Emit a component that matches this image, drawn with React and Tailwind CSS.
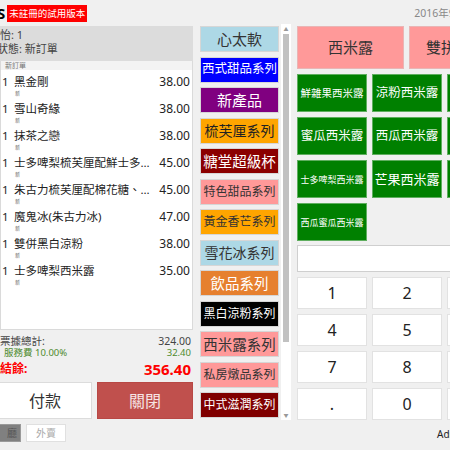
const ITEMS = [
  { q: 1, name: '黑金剛', price: '38.00' },
  { q: 1, name: '雪山奇緣', price: '38.00' },
  { q: 1, name: '抹茶之戀', price: '38.00' },
  { q: 1, name: '士多啤梨梳芙厘配鮮士多啤梨', price: '45.00' },
  { q: 1, name: '朱古力梳芙厘配棉花糖、朱古力', price: '45.00' },
  { q: 1, name: '魔鬼冰(朱古力冰)', price: '47.00' },
  { q: 1, name: '雙併黑白涼粉', price: '38.00' },
  { q: 1, name: '士多啤梨西米露', price: '35.00' },
];

const CATS = [
  { label: '心太軟', cls: 'bg-[#add8e6] text-[#333] text-[15px]' },
  { label: '西式甜品系列', cls: 'bg-[#0000ff] text-white text-[12.5px]' },
  { label: '新產品', cls: 'bg-[#800080] text-white text-[15px]' },
  { label: '梳芙厘系列', cls: 'bg-[#ffa500] text-[#222] text-[14px]' },
  { label: '糖堂超級杯', cls: 'bg-[#8b0000] text-white text-[14.5px]' },
  { label: '特色甜品系列', cls: 'bg-[#ff9999] text-[#333] text-[12px]' },
  { label: '黃金香芒系列', cls: 'bg-[#ffa500] text-[#333] text-[12px]' },
  { label: '雪花冰系列', cls: 'bg-[#add8e6] text-[#333] text-[14px]' },
  { label: '飲品系列', cls: 'bg-[#e6802f] text-white text-[14.5px]' },
  { label: '黑白涼粉系列', cls: 'bg-black text-white text-[12px]' },
  { label: '西米露系列', cls: 'bg-[#ff9999] text-[#333] text-[14.5px]' },
  { label: '私房燉品系列', cls: 'bg-[#ff9999] text-[#333] text-[12px]' },
  { label: '中式滋潤系列', cls: 'bg-[#800000] text-white text-[12px]' },
];

const GREENS = [
  { label: '鮮雜果西米露', size: 'text-[10.5px]' },
  { label: '涼粉西米露', size: 'text-[12.5px]' },
  { label: '椰汁西米露', size: 'text-[12.5px]' },
  { label: '蜜瓜西米露', size: 'text-[12.5px]' },
  { label: '西瓜西米露', size: 'text-[12.5px]' },
  { label: '黑糯米西米露', size: 'text-[10.5px]' },
  { label: '士多啤梨西米露', size: 'text-[9px]' },
  { label: '芒果西米露', size: 'text-[13px]' },
  { label: '榴槤西米露', size: 'text-[12.5px]' },
  { label: '西瓜蜜瓜西米露', size: 'text-[9px]' },
];

const KEYS = ['1', '2', '3', '4', '5', '6', '7', '8', '9', '.', '0', 'C'];

export default function App() {
  return (
    <div className="w-[450px] h-[450px] overflow-hidden bg-[#f0f0f0] font-['Noto_Sans','Noto_Sans_CJK_TC',sans-serif] text-[#333]">
      <div className="w-[620px]">
        {/* header */}
        <div className="h-[26px] flex items-center">
          <span className="-ml-[3px] text-[15px] font-bold text-black leading-none">S</span>
          <span className="ml-[2px] h-[17px] px-[2px] bg-[#ff0000] text-white text-[9.5px] leading-[17px] font-['Noto_Sans_CJK_TC',sans-serif]">
            未註冊的試用版本
          </span>
          <span className="ml-[327px] text-[10.5px] text-[#888] leading-none mt-[1px]">2016年9月12日</span>
        </div>

        {/* main */}
        <div className="flex h-[394px]">
          {/* left order panel */}
          <div className="w-[193px] flex flex-col">
            <div className="h-[35px] bg-[#dcdcdc] pt-[2px] text-[11px] leading-[14px] text-[#444]">
              <div>怡: 1</div>
              <div className="-ml-[3px]">狀態: 新訂單</div>
            </div>
            <div className="h-[269px] bg-white border border-[#dadada] border-t-0">
              <div className="h-[9px] bg-[#f3f3f3] pl-[4px] text-[7px] leading-[9px] text-[#777]">新訂單</div>
              {ITEMS.map((it, i) => (
                <div key={i} className="h-[27px] pt-[3px]">
                  <div className="flex h-[18px] items-center text-[11.5px] leading-[18px] text-[#222]">
                    <span className="w-[13px] pl-[1px]">{it.q}</span>
                    <span className="flex-1 truncate pr-[5px]">{it.name}</span>
                    <span className="pr-[2px] text-[12px]">{it.price}</span>
                  </div>
                  <div className="pl-[14px] text-[5px] leading-[5px] text-[#666]">新</div>
                </div>
              ))}
            </div>
            <div className="mt-[5px] flex justify-between text-[10.5px] leading-[12px] text-[#444]">
              <span>票據總計:</span>
              <span className="pr-[2px]">324.00</span>
            </div>
            <div className="flex justify-between text-[9.5px] leading-[11px] text-[#4e8a2e]">
              <span className="pl-[4px]">服務費 10.00%</span>
              <span className="pr-[2px]">32.40</span>
            </div>
            <div className="mt-[2px] flex justify-between items-center leading-[18px] font-bold text-[#ff0000]">
              <span className="text-[12px]">結餘:</span>
              <span className="text-[15px] pr-[2px]">356.40</span>
            </div>
            <div className="mt-[4px] flex gap-[5px] h-[37px]">
              <div className="-ml-[2px] w-[94px] bg-white border border-[#dcdcdc] flex items-center justify-center text-[16px] text-[#333]">
                付款
              </div>
              <div className="w-[96px] bg-[#c0504d] border border-[#b84845] flex items-center justify-center text-[16px] text-[#f6e4e4]">
                關閉
              </div>
            </div>
          </div>

          {/* categories */}
          <div className="ml-[7px] flex gap-[2px]">
            <div className="w-[79px] flex flex-col gap-[4.5px]">
              {CATS.map((c) => (
                <div
                  key={c.label}
                  className={`h-[26px] border border-[#d6d6d6] flex items-center justify-center leading-none whitespace-nowrap ${c.cls}`}
                >
                  {c.label}
                </div>
              ))}
            </div>
            <div className="w-[10px] -mt-[2px] h-[396px] bg-white flex flex-col items-center">
              <div className="h-[10px] flex items-center text-[5px] text-[#999] leading-none">▲</div>
              <div className="w-[6px] h-[308px] bg-[#c1c1c1]" />
              <div className="flex-1" />
              <div className="h-[10px] flex items-center text-[5px] text-[#999] leading-none">▼</div>
            </div>
          </div>

          {/* right products */}
          <div className="ml-[6px] flex flex-col">
            <div className="flex gap-[5px] h-[43px]">
              <div className="w-[107px] bg-[#ff9999] border border-[#e9b5b5] flex items-center justify-center text-[15px] text-[#333]">
                西米露
              </div>
              <div className="w-[107px] bg-[#ff9999] border border-[#e9b5b5] flex items-center pl-[16px] text-[15px] text-[#333]">
                雙拼西米露
              </div>
            </div>
            <div className="mt-[5px] grid grid-cols-[70px_70px_70px] auto-rows-[38px] gap-[5px]">
              {GREENS.map((g) => (
                <div
                  key={g.label}
                  className={`bg-[#008000] border border-[#5fae5f] flex items-center justify-center text-white whitespace-nowrap leading-none ${g.size}`}
                >
                  {g.label}
                </div>
              ))}
            </div>
            <div className="mt-[4px] h-[27px] w-[230px] bg-white border border-[#cfcfcf]" />
            <div className="mt-[5px] grid grid-cols-[70px_70px_70px] auto-rows-[32px] gap-[5px]">
              {KEYS.map((k) => (
                <div
                  key={k}
                  className="bg-white border border-[#e2e2e2] flex items-center justify-center text-[16px] text-[#222] leading-none"
                >
                  {k}
                </div>
              ))}
            </div>
          </div>
        </div>

        {/* bottom bar */}
        <div className="h-[30px] flex pt-[4px]">
          <div className="-ml-[2px] w-[23px] h-[18px] bg-[#808080] border border-[#9a9a9a] flex items-center justify-end pr-[3px] text-[10px] text-[#555] leading-none">
            廳
          </div>
          <div className="ml-[5px] w-[40px] h-[18px] bg-white border border-[#e0e0e0] flex items-center justify-center text-[10px] text-[#aaa] leading-none">
            外賣
          </div>
          <div className="ml-[371px] mt-[5px] text-[10px] text-[#222] leading-none">Admin</div>
        </div>
      </div>
    </div>
  );
}
